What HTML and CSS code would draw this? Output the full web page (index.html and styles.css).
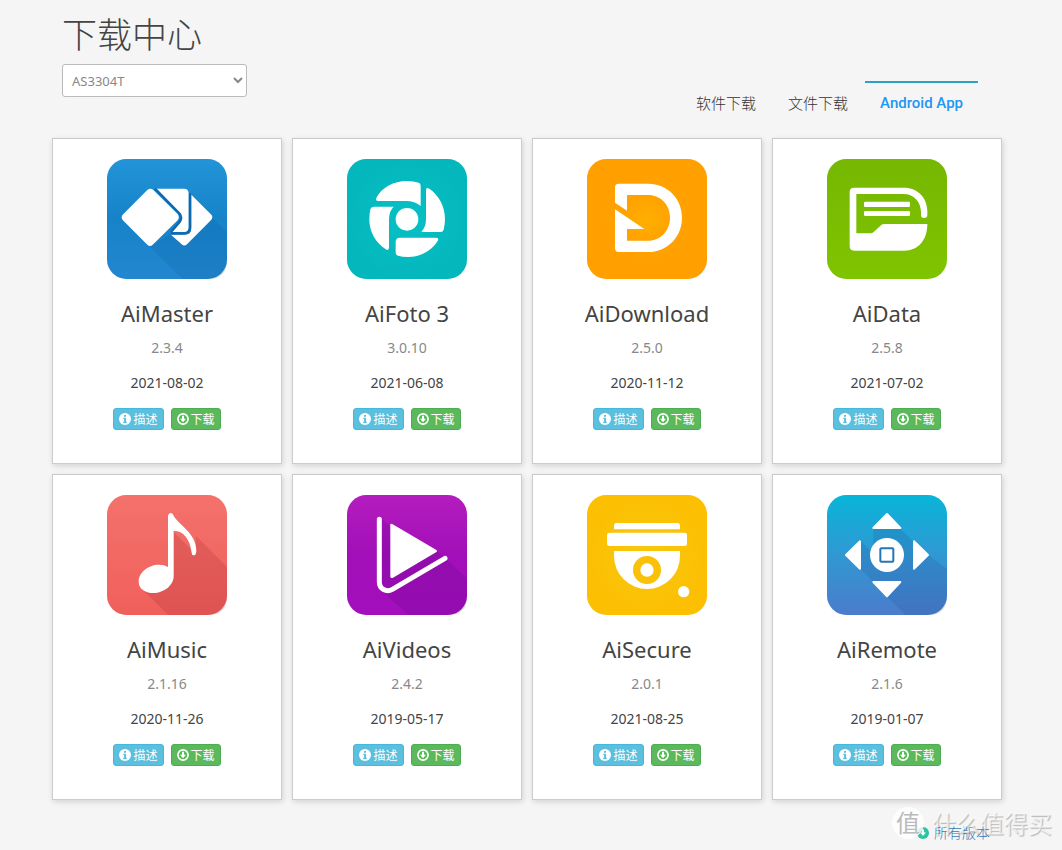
FILE: index.html
```html
<!DOCTYPE html>
<html lang="zh-CN">
<head>
<meta charset="utf-8">
<meta name="viewport" content="width=device-width, initial-scale=1">
<title>下载中心</title>
<link rel="stylesheet" href="styles.css">
</head>
<body>
<svg class="defs" aria-hidden="true">
  <defs>
    <linearGradient id="g-master" x1="0" y1="0" x2="0" y2="1"><stop offset="0" stop-color="#2394d8"/><stop offset=".5" stop-color="#1683c9"/><stop offset="1" stop-color="#2387d0"/></linearGradient>
    <radialGradient id="g-foto"><stop offset="0" stop-color="#06c0c4"/><stop offset="1" stop-color="#04b7bd"/></radialGradient>
    <radialGradient id="g-down"><stop offset="0" stop-color="#ffb000"/><stop offset=".4" stop-color="#ffa200"/><stop offset="1" stop-color="#ff9f00"/></radialGradient>
    <linearGradient id="g-data" x1="0" y1="0" x2="0" y2="1"><stop offset="0" stop-color="#76b702"/><stop offset="1" stop-color="#7fc400"/></linearGradient>
    <linearGradient id="g-music" x1="0" y1="0" x2="0" y2="1"><stop offset="0" stop-color="#f4716c"/><stop offset="1" stop-color="#f0605b"/></linearGradient>
    <linearGradient id="g-video" x1="0" y1="0" x2="0" y2="1"><stop offset="0" stop-color="#b41dbe"/><stop offset=".5" stop-color="#a20fb8"/><stop offset="1" stop-color="#a40ebd"/></linearGradient>
    <radialGradient id="g-secure"><stop offset="0" stop-color="#f8c80e"/><stop offset="1" stop-color="#fcbf02"/></radialGradient>
    <linearGradient id="g-remote" x1="0" y1="0" x2="0" y2="1"><stop offset="0" stop-color="#08b5d9"/><stop offset=".5" stop-color="#3098d3"/><stop offset="1" stop-color="#4b7ccb"/></linearGradient>
    <symbol id="i-info" viewBox="0 0 12 12"><circle cx="6" cy="6" r="6" fill="#fff"/><path d="M5 2h2v1.700H5zM4.300 4.700H7V8.700h.8V10H4.300V8.700h.8V5.900h-.8z" fill="#5bc0de"/></symbol>
    <symbol id="i-down" viewBox="0 0 12 12"><circle cx="6" cy="6" r="5.100" fill="none" stroke="#fff" stroke-width="1.600"/><path d="M5 2.700h2v3h2L6 9.200 3 5.700h2z" fill="#fff"/></symbol>
  </defs>
</svg>

<div class="page">
  <header class="header">
    <div class="heading">
      <h1 class="title">下载中心</h1>
      <select class="model" aria-label="型号"><option>AS3304T</option></select>
    </div>
    <nav class="tabs">
      <a class="tab" href="#software">软件下载</a>
      <a class="tab" href="#files">文件下载</a>
      <a class="tab tab-active" href="#android" aria-current="page">Android App</a>
    </nav>
  </header>

  <main class="apps">
    <article class="card">
      <svg class="app-icon" viewBox="51 27 360 360" aria-hidden="true">
        <rect x="51" y="27" width="360" height="360" rx="58" fill="url(#g-master)"/>
        <path d="M176 286L277 387H353Q411 387 411 329V247L366 202L282 286L244 250L182 288z" fill="#0b5d9e" opacity=".2"/>
        <path d="M304 134L364 194Q370 201 364 209L291 283Q283 290 275 283L243 254H284Q304 254 304 234z" fill="#fff"/>
        <path d="M195 116H282Q296 116 296 130V232Q296 246 282 246H243L269 216Q278 204 269 191z" fill="#fff"/>
        <path d="M195 116L269 191Q278 204 269 216L243 246M300 130V234Q300 250 284 250H243" fill="none" stroke="#0f68ae" stroke-width="7"/>
        <path d="M172 120Q181 112 190 120L263 192Q270 202 263 211L188 284Q180 292 172 284L98 210Q92 202 98 194z" fill="#fff"/>
      </svg>
      <h2 class="name">AiMaster</h2>
      <p class="version">2.3.4</p>
      <p class="date">2021-08-02</p>
      <div class="actions">
        <button class="btn btn-info" type="button"><svg class="btn-icon" aria-hidden="true"><use href="#i-info"/></svg>描述</button>
        <button class="btn btn-down" type="button"><svg class="btn-icon" aria-hidden="true"><use href="#i-down"/></svg>下载</button>
      </div>
    </article>

    <article class="card">
      <svg class="app-icon" viewBox="51 27 360 360" aria-hidden="true">
        <rect x="51" y="27" width="360" height="360" rx="58" fill="url(#g-foto)"/>
        <circle cx="231" cy="208" r="34" fill="#fff"/>
        <path d="M139 144C155 112 192 93 230 93Q252 93 266 98Q272 100 272 107V168Q254 153 228 153H145Q135 153 139 144z" fill="#fff"/>
        <path d="M288 121Q288 110 298 116C326 135 345 169 345 207Q345 224 341 239Q339 246 332 246H274Q288 231 288 207z" fill="#fff"/>
        <path d="M317 263Q329 263 323 273C304 302 272 321 235 321Q217 321 204 317Q197 315 197 308V276Q197 263 210 263z" fill="#fff"/>
        <path d="M191 170Q177 184 177 207V292Q177 304 167 298C137 278 118 246 118 208Q118 193 121 178Q123 170 131 170z" fill="#fff"/>
      </svg>
      <h2 class="name">AiFoto 3</h2>
      <p class="version">3.0.10</p>
      <p class="date">2021-06-08</p>
      <div class="actions">
        <button class="btn btn-info" type="button"><svg class="btn-icon" aria-hidden="true"><use href="#i-info"/></svg>描述</button>
        <button class="btn btn-down" type="button"><svg class="btn-icon" aria-hidden="true"><use href="#i-down"/></svg>下载</button>
      </div>
    </article>

    <article class="card">
      <svg class="app-icon" viewBox="51 27 360 360" aria-hidden="true">
        <rect x="51" y="27" width="360" height="360" rx="58" fill="url(#g-down)"/>
        <path d="M135 158V112Q135 101 146 101H234C292 101 336 145 336 203S292 306 234 306H146Q135 306 135 295V178L223 237H171V272H234C272 272 300 242 300 203S272 135 234 135H171V182z" fill="#fff"/>
      </svg>
      <h2 class="name">AiDownload</h2>
      <p class="version">2.5.0</p>
      <p class="date">2020-11-12</p>
      <div class="actions">
        <button class="btn btn-info" type="button"><svg class="btn-icon" aria-hidden="true"><use href="#i-info"/></svg>描述</button>
        <button class="btn btn-down" type="button"><svg class="btn-icon" aria-hidden="true"><use href="#i-down"/></svg>下载</button>
      </div>
    </article>

    <article class="card">
      <svg class="app-icon" viewBox="51 27 360 360" aria-hidden="true">
        <rect x="51" y="27" width="360" height="360" rx="58" fill="url(#g-data)"/>
        <path d="M132 113H282C323 113 352 143 352 184V195Q352 204 342 204Q333 204 333 195V187C333 155 311 132 280 132H139V250H182Q187 250 191 246L213 226Q217 222 223 222H352C352 269 326 302 282 302H132Q119 302 119 289V126Q119 113 132 113z" fill="#fff"/>
        <rect x="162" y="155" width="138" height="16" rx="4" fill="#fff"/>
        <rect x="162" y="183" width="138" height="15" rx="4" fill="#fff"/>
      </svg>
      <h2 class="name">AiData</h2>
      <p class="version">2.5.8</p>
      <p class="date">2021-07-02</p>
      <div class="actions">
        <button class="btn btn-info" type="button"><svg class="btn-icon" aria-hidden="true"><use href="#i-info"/></svg>描述</button>
        <button class="btn btn-down" type="button"><svg class="btn-icon" aria-hidden="true"><use href="#i-down"/></svg>下载</button>
      </div>
    </article>

    <article class="card">
      <svg class="app-icon" viewBox="51 30 360 360" aria-hidden="true">
        <rect x="51" y="30" width="360" height="360" rx="58" fill="url(#g-music)"/>
        <path d="M157 313L234 390H353Q411 390 411 332V246L318 153L316 208L251 140V280z" fill="#a62a32" opacity=".22"/>
        <path d="M234 92Q236 83 243 84Q248 85 251 92C265 119 319 143 319 197Q318 211 311 211Q305 211 305 203C300 161 278 136 251 137V273C251 300 223 324 190 324C165 324 146 311 146 290C146 263 174 239 207 239Q223 239 234 246z" fill="#fff"/>
      </svg>
      <h2 class="name">AiMusic</h2>
      <p class="version">2.1.16</p>
      <p class="date">2020-11-26</p>
      <div class="actions">
        <button class="btn btn-info" type="button"><svg class="btn-icon" aria-hidden="true"><use href="#i-info"/></svg>描述</button>
        <button class="btn btn-down" type="button"><svg class="btn-icon" aria-hidden="true"><use href="#i-down"/></svg>下载</button>
      </div>
    </article>

    <article class="card">
      <svg class="app-icon" viewBox="51 30 360 360" aria-hidden="true">
        <rect x="51" y="30" width="360" height="360" rx="58" fill="url(#g-video)"/>
        <path d="M154 100L182 126V280L322 198L411 280V332Q411 390 353 390H234L150 312z" fill="#5c0480" opacity=".2"/>
        <path d="M181 121Q181 114 188 118L318 194Q324 198 318 202L189 278Q181 282 181 274z" fill="#fff"/>
        <path d="M148 103V291C148 312 169 323 187 313L345 220" fill="none" stroke="#fff" stroke-width="15" stroke-linecap="round"/>
      </svg>
      <h2 class="name">AiVideos</h2>
      <p class="version">2.4.2</p>
      <p class="date">2019-05-17</p>
      <div class="actions">
        <button class="btn btn-info" type="button"><svg class="btn-icon" aria-hidden="true"><use href="#i-info"/></svg>描述</button>
        <button class="btn btn-down" type="button"><svg class="btn-icon" aria-hidden="true"><use href="#i-down"/></svg>下载</button>
      </div>
    </article>

    <article class="card">
      <svg class="app-icon" viewBox="51 30 360 360" aria-hidden="true">
        <rect x="51" y="30" width="360" height="360" rx="58" fill="url(#g-secure)"/>
        <path d="M132 133V122Q132 114 140 114H322Q330 114 330 122V133z" fill="#fff"/>
        <rect x="111" y="143" width="240" height="40" rx="7" fill="#fff"/>
        <path d="M132 198H330V213A99 99 0 0 1 132 213z" fill="#fff"/>
        <circle cx="231" cy="255" r="31" fill="#fff" stroke="#f9c208" stroke-width="22"/>
        <circle cx="341" cy="320" r="17" fill="#fff"/>
      </svg>
      <h2 class="name">AiSecure</h2>
      <p class="version">2.0.1</p>
      <p class="date">2021-08-25</p>
      <div class="actions">
        <button class="btn btn-info" type="button"><svg class="btn-icon" aria-hidden="true"><use href="#i-info"/></svg>描述</button>
        <button class="btn btn-down" type="button"><svg class="btn-icon" aria-hidden="true"><use href="#i-down"/></svg>下载</button>
      </div>
    </article>

    <article class="card">
      <svg class="app-icon" viewBox="51 30 360 360" aria-hidden="true">
        <rect x="51" y="30" width="360" height="360" rx="58" fill="url(#g-remote)"/>
        <path d="M152 168L190 205V132H272L308 168L356 210L411 252V332Q411 390 353 390H286L231 335L190 290L152 252z" fill="#244f9c" opacity=".2"/>
        <g fill="#fff" stroke="#fff" stroke-width="6" stroke-linejoin="round">
          <path d="M231 87L271 129H190z"/><path d="M231 334L190 291H271z"/><path d="M108 210L150 169V251z"/><path d="M354 210L312 169V251z"/>
        </g>
        <circle cx="231" cy="210" r="51" fill="#fff"/>
        <rect x="211" y="190" width="39" height="40" rx="3" fill="none" stroke="#2575b3" stroke-width="6"/>
      </svg>
      <h2 class="name">AiRemote</h2>
      <p class="version">2.1.6</p>
      <p class="date">2019-01-07</p>
      <div class="actions">
        <button class="btn btn-info" type="button"><svg class="btn-icon" aria-hidden="true"><use href="#i-info"/></svg>描述</button>
        <button class="btn btn-down" type="button"><svg class="btn-icon" aria-hidden="true"><use href="#i-down"/></svg>下载</button>
      </div>
    </article>
  </main>

  <footer class="footer">
    <a class="all" href="#all">
      <svg class="all-icon" viewBox="0 0 12 12" aria-hidden="true"><circle cx="6" cy="6" r="6" fill="#2cc3a0"/><path d="M5 2.500h2v3h2L6 9 3 5.500h2z" fill="#fff"/></svg>
      所有版本
    </a>
  </footer>
</div>
<div class="watermark"><span class="mark">值</span><span class="mark-text">什么值得买</span></div>
</body>
</html>
```

FILE: styles.css
```css
* {
  box-sizing: border-box;
}

body {
  position: relative;
  margin: 0;
  background: #f5f5f5;
  color: #444;
  font: 14px/20px "Noto Sans", "Noto Sans CJK SC", sans-serif;
}

.defs {
  position: absolute;
  width: 0;
  height: 0;
}

.page {
  max-width: 1062px;
  padding: 13px 60px 7px 52px;
}

.header {
  display: flex;
  justify-content: space-between;
  padding: 0 24px 15px 10px;
}

.heading {
  padding-bottom: 26px;
}

.title {
  margin: 0 0 11px;
  font-family: "Noto Sans CJK SC", sans-serif;
  font-size: 35px;
  font-weight: 300;
  line-height: 40px;
}

.model {
  display: block;
  width: 185px;
  height: 33px;
  padding: 0 0 0 5px;
  border: 1px solid #bbb;
  border-radius: 3px;
  background: #fff;
  color: #888;
  font: inherit;
  font-size: 13px;
}

.tabs {
  display: flex;
  align-self: flex-end;
  gap: 2px;
}

.tab {
  padding: 10px 15px;
  border-top: 2px solid transparent;
  color: #333;
  font-size: 15px;
  font-weight: 300;
  text-decoration: none;
}

.tab-active {
  border-top-color: #2ba3c7;
  color: #2196f3;
  font-family: Roboto, sans-serif;
  font-weight: 500;
}

.apps {
  display: grid;
  grid-template-columns: repeat(auto-fill, minmax(220px, 1fr));
  gap: 10px;
}

.card {
  display: flex;
  flex-direction: column;
  align-items: center;
  padding: 20px 10px 33px;
  border: 1px solid #ccc;
  background: #fff;
  box-shadow: 1px 2px 6px rgba(0, 0, 0, 0.14);
}

.app-icon {
  width: 120px;
  height: 120px;
}

.name {
  margin: 19px 0 10px;
  font-size: 22px;
  font-weight: 400;
  line-height: 30px;
}

.version,
.date {
  margin: 0 0 15px;
}

.version {
  color: #888;
}

.actions {
  display: flex;
  gap: 7px;
}

.btn {
  display: flex;
  align-items: center;
  gap: 2px;
  height: 22px;
  padding: 0 5px;
  border: 1px solid #46b8da;
  border-radius: 3px;
  background: #5bc0de;
  color: #fff;
  font: 12px/18px "Noto Sans CJK SC", sans-serif;
}

.btn-down {
  border-color: #4cae4c;
  background: #5cb85c;
}

.btn-icon {
  width: 12px;
  height: 12px;
}

.footer {
  display: flex;
  justify-content: flex-end;
  padding: 23px 12px 0 0;
}

.all {
  display: flex;
  align-items: center;
  gap: 5px;
  color: #337ab7;
  font-weight: 300;
  text-decoration: none;
}

.all-icon {
  width: 12px;
  height: 12px;
}

.watermark {
  position: absolute;
  right: 10px;
  bottom: 10px;
  display: flex;
  align-items: center;
  gap: 8px;
  color: rgba(255, 255, 255, 0.6);
  font-family: "Noto Sans CJK SC", sans-serif;
  font-size: 24px;
  line-height: 34px;
  text-shadow: 1px 1px 1px rgba(0, 0, 0, 0.25);
  pointer-events: none;
}

.mark {
  width: 32px;
  height: 32px;
  border-radius: 50%;
  background: rgba(255, 255, 255, 0.8);
  color: #bbb;
  line-height: 30px;
  text-align: center;
  text-shadow: none;
}
```
